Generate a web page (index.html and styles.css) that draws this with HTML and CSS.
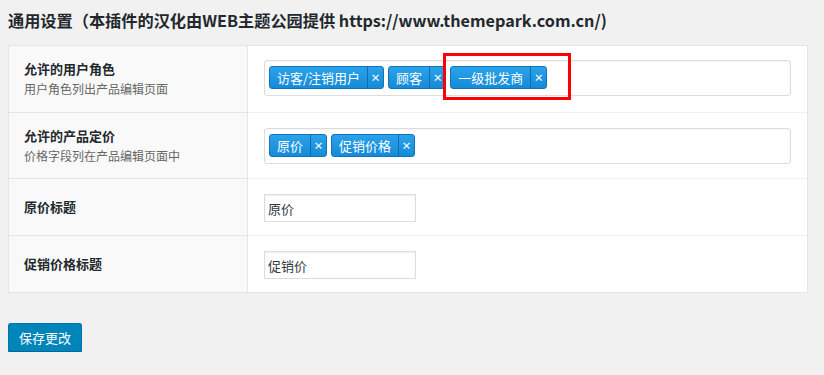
FILE: index.html
```html
<!DOCTYPE html>
<html lang="zh-CN">
<head>
<meta charset="utf-8">
<title>通用设置</title>
<link rel="stylesheet" href="styles.css">
</head>
<body>
<div class="wrap">
  <h2 class="title">通用设置（本插件的汉化由WEB主题公园提供 https://www.themepark.com.cn/)</h2>
  <div class="form-table">
    <div class="row r1">
      <div class="label">
        <div class="lt">允许的用户角色</div>
        <div class="ld">用户角色列出产品编辑页面</div>
      </div>
      <div class="field">
        <div class="chosen">
          <span class="tag"><span class="tt">访客/注销用户</span><span class="tx">×</span></span>
          <span class="tag"><span class="tt">顾客</span><span class="tx">×</span></span>
          <span class="tag"><span class="tt">一级批发商</span><span class="tx">×</span></span>
        </div>
        <div class="highlight"></div>
      </div>
    </div>
    <div class="row r2">
      <div class="label">
        <div class="lt">允许的产品定价</div>
        <div class="ld">价格字段列在产品编辑页面中</div>
      </div>
      <div class="field">
        <div class="chosen">
          <span class="tag"><span class="tt">原价</span><span class="tx">×</span></span>
          <span class="tag"><span class="tt">促销价格</span><span class="tx">×</span></span>
        </div>
      </div>
    </div>
    <div class="row r3">
      <div class="label"><div class="lt">原价标题</div></div>
      <div class="field"><input class="text" type="text" value="原价"></div>
    </div>
    <div class="row r4">
      <div class="label"><div class="lt">促销价格标题</div></div>
      <div class="field"><input class="text" type="text" value="促销价"></div>
    </div>
  </div>
  <button class="btn" type="button">保存更改</button>
</div>
</body>
</html>
```

FILE: styles.css
```css
html, body {
  margin: 0;
  padding: 0;
  background: #f1f1f1;
}
body {
  font-family: "Noto Sans CJK SC", "Noto Sans", sans-serif;
  color: #23282d;
}
.wrap {
  padding: 0 8px;
  width: 800px;
}
.title {
  margin: 0;
  height: 45px;
  line-height: 40px;
  font-size: 16.2px;
  font-weight: bold;
  color: #23282d;
  white-space: nowrap;
}
.form-table {
  background: #fff;
  border: 1px solid #e5e5e5;
}
.row {
  display: flex;
}
.r1, .r2 { height: 66px; }
.r3, .r4 { height: 57px; }
.label {
  width: 223px;
  flex: none;
  background: #f9f9f9;
  border-right: 1px solid #e5e5e5;
  padding-left: 15px;
  display: flex;
  flex-direction: column;
  justify-content: center;
}
.row + .row .label { border-top: 1px solid #e5e5e5; }
.row + .row .field { border-top: 1px solid #f0f0f0; }
.lt {
  font-size: 13px;
  font-weight: bold;
  line-height: 18px;
  color: #23282d;
}
.ld {
  font-size: 12px;
  line-height: 18px;
  color: #666;
  margin-top: 2px;
}
.field {
  flex: 1;
  position: relative;
  padding-left: 16px;
  display: flex;
  align-items: center;
}
.r1 .field { padding-bottom: 3px; }
.chosen {
  width: 527px;
  height: 36px;
  box-sizing: border-box;
  border: 1px solid #dcdcdc;
  border-radius: 3px;
  background: #fff;
  display: flex;
  align-items: center;
  gap: 4px;
  padding-left: 4px;
  box-shadow: inset 0 1px 2px rgba(0,0,0,0.04);
}
.tag {
  display: inline-flex;
  height: 23px;
  box-sizing: border-box;
  border: 1px solid #1273bd;
  border-radius: 3px;
  background: linear-gradient(#2aa3ea, #168ad7);
  color: #fff;
  font-size: 13px;
  line-height: 21px;
}
.tt {
  padding: 0 7px;
}
.tx {
  width: 15px;
  text-align: center;
  border-left: 1px solid #106cb0;
  font-size: 10px;
  font-weight: bold;
}
.highlight {
  position: absolute;
  left: 195px;
  top: 7px;
  width: 122px;
  height: 41px;
  border: 3px solid #ff0000;
}
.text {
  width: 152px;
  height: 28px;
  box-sizing: border-box;
  border: 1px solid #dddddd;
  box-shadow: inset 0 1px 2px rgba(0,0,0,0.07);
  padding: 0 3px;
  font-family: "Noto Sans CJK SC", sans-serif;
  font-size: 13px;
  color: #32373c;
  background: #fff;
  margin-top: 2px;
}
.btn {
  margin-top: 30px;
  width: 74px;
  height: 29px;
  background: #0085ba;
  border: 1px solid #0073aa;
  border-bottom-color: #006799;
  border-radius: 3px;
  box-shadow: 0 1px 0 #006799;
  color: #fff;
  font-family: "Noto Sans CJK SC", sans-serif;
  font-size: 13px;
  padding: 0;
  line-height: 26px;
}
```
